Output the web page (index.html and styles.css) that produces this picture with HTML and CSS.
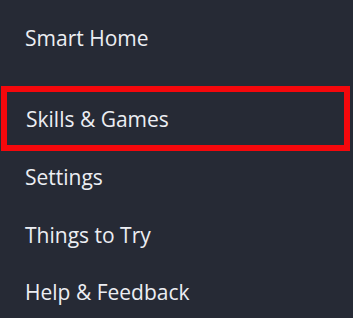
FILE: index.html
```html
<!DOCTYPE html>
<html>
<head>
<meta charset="utf-8">
<link rel="stylesheet" href="styles.css">
</head>
<body>
<ul class="menu">
  <li class="item first">Smart Home</li>
  <li class="item boxed">Skills &amp; Games</li>
  <li class="item after-box">Settings</li>
  <li class="item">Things to Try</li>
  <li class="item">Help &amp; Feedback</li>
</ul>
</body>
</html>
```
FILE: styles.css
```css
html, body {
  margin: 0;
  padding: 0;
  background: #262a35;
  width: 353px;
  height: 318px;
  overflow: hidden;
}
.menu {
  list-style: none;
  margin: 0;
  padding: 9px 0 0 0;
  font-family: "Open Sans", "Noto Sans", sans-serif;
  font-size: 21px;
  color: #eceef3;
}
.item {
  height: 57.5px;
  line-height: 57.5px;
  padding-left: 25px;
  white-space: nowrap;
}
.item.first {
  height: 58px;
  line-height: 58px;
}
.item.boxed {
  margin: 19px 3px 0 1px;
  border: 6px solid #f5080c;
  height: 51px;
  line-height: 51px;
  padding-top: 2px;
  padding-left: 19px;
}
.item.after-box {
  margin-top: -2px;
}
```
